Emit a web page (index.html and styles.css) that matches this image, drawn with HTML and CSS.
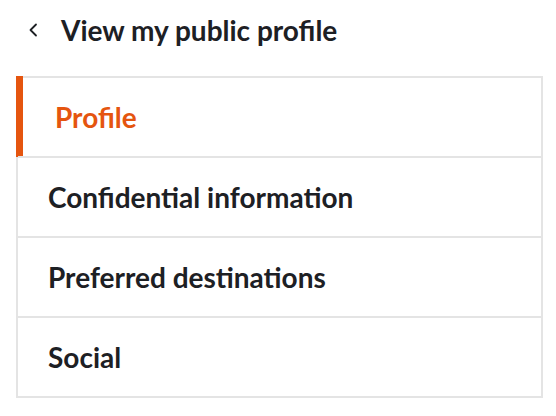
FILE: index.html
```html
<!DOCTYPE html>
<html lang="en">
<head>
<meta charset="utf-8">
<title>Profile menu</title>
<link rel="stylesheet" href="styles.css">
</head>
<body>
<a class="back" href="#">
  <svg class="back-icon" width="10" height="14" viewBox="0 0 10 14" aria-hidden="true">
    <path d="M8 1.5 L2.5 7 L8 12.5" fill="none" stroke="#1d2024" stroke-width="1.8" stroke-linecap="round" stroke-linejoin="round"/>
  </svg>
  <span class="back-label">View my public profile</span>
</a>
<ul class="menu">
  <li class="menu-item is-active">Profile</li>
  <li class="menu-item">Confiden&zwnj;tial informa&zwnj;tion</li>
  <li class="menu-item">Preferred des&zwnj;tina&zwnj;tions</li>
  <li class="menu-item">Social</li>
</ul>
</body>
</html>
```

FILE: styles.css
```css
html, body {
  margin: 0;
  padding: 0;
  background: #ffffff;
}

body {
  font-family: Lato, "Noto Sans", "Liberation Sans", sans-serif;
  font-weight: 700;
  color: #1d2024;
  font-size: 28px;
  line-height: 34px;
}

.back {
  display: flex;
  align-items: center;
  gap: 23px;
  padding: 13px 0 29px 28px;
  color: inherit;
  text-decoration: none;
}

.back-icon {
  display: block;
  flex: none;
}

.menu {
  list-style: none;
  margin: 0 0 0 16px;
  padding: 0;
  width: 523px;
  border: 2px solid #e4e4e4;
}

.menu-item {
  position: relative;
  height: 78px;
  display: flex;
  align-items: center;
  padding-left: 30px;
}

.menu-item + .menu-item {
  border-top: 2px solid #e4e4e4;
}

.menu-item.is-active {
  color: #e5550f;
  padding-left: 37px;
}

.menu-item.is-active::before {
  content: "";
  position: absolute;
  left: -2px;
  top: -2px;
  bottom: -1px;
  width: 7px;
  background: #e5550f;
}
```
